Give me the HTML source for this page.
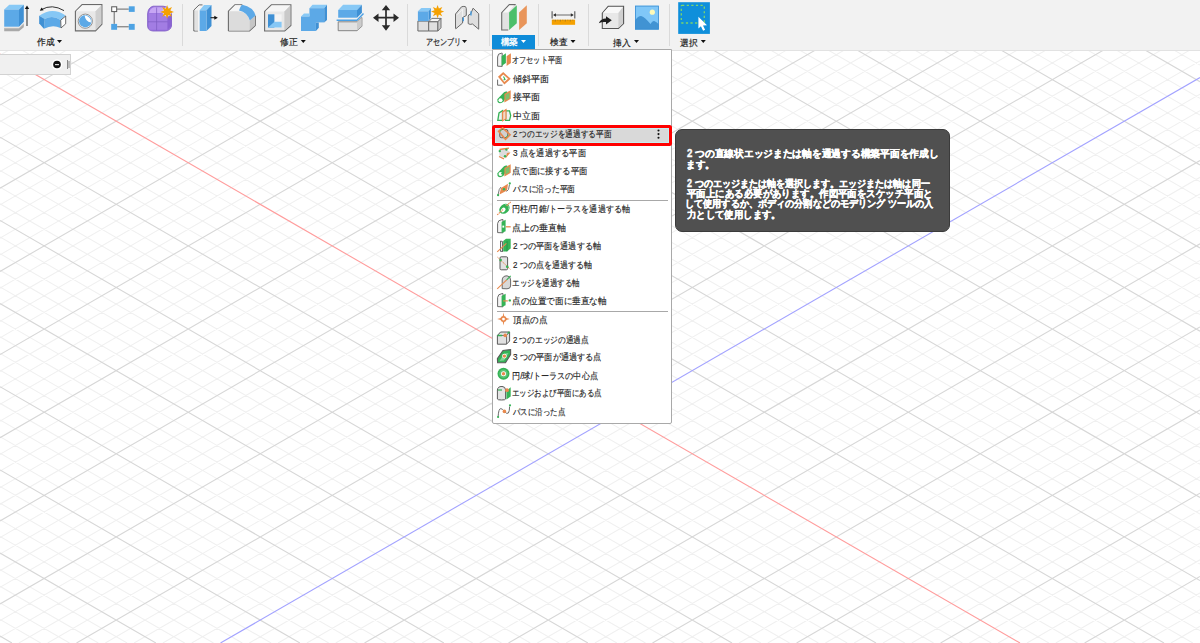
<!DOCTYPE html>
<html><head><meta charset="utf-8"><style>
*{box-sizing:border-box}
html,body{margin:0;padding:0;width:1200px;height:643px;overflow:hidden;background:#fff;font-family:"Liberation Sans",sans-serif}
.grid{position:absolute;left:0;top:0}
.tx{position:absolute;line-height:12px;white-space:nowrap;transform-origin:0 0;-webkit-text-stroke:0.15px currentColor}
.a{position:absolute}
#tb{position:absolute;left:0;top:0;width:1200px;height:50.6px;background:#f2f2f2;border-bottom:1.2px solid #e2e2e2}
.sep{position:absolute;top:4px;width:1px;height:42px;background:#dadada}
.lbl{position:absolute;top:36px;height:12px;font-size:9px;line-height:12px;color:#2a2a2a;white-space:nowrap;letter-spacing:-0.2px}
.tri{display:inline-block;width:0;height:0;border-left:2.5px solid transparent;border-right:2.5px solid transparent;border-top:3px solid #111;vertical-align:middle;margin-left:3px;position:relative;top:-1px}
#panel{position:absolute;left:-1px;top:54px;width:72px;height:21px;background:#f0f0f0;border:1px solid #d2d2d2}
#menu{position:absolute;left:492px;top:49px;width:180px;height:375px;background:#fff;border:1px solid #a9a9a9;border-top:1px solid #a9a9a9;border-radius:0 0 2px 2px}
.row{position:absolute;left:0;width:178px;height:18px}
.row .t{position:absolute;left:20px;top:3px;font-size:8.6px;line-height:12px;color:#333;white-space:nowrap}
.row svg{position:absolute;left:4px;top:2px}
.msep{position:absolute;left:4px;width:171px;height:1px;background:#a8a8a8}
#tip{position:absolute;left:675px;top:129px;width:275px;height:103px;background:#505050;border-radius:7px;border:1px solid #3b3b3b}
#tip .tx{position:absolute;left:11px;top:17px;width:262px;font-size:9.6px;line-height:10.2px;color:#fff;font-weight:bold;white-space:nowrap}
</style></head><body>
<svg class="grid" width="1200" height="643" viewBox="0 0 1200 643">
<path d="M1173.7 0.0L1200.0 15.2M1144.9 0.0L1200.0 31.8M1116.1 0.0L1200.0 48.5M1087.3 0.0L1200.0 65.1M1029.7 0.0L1200.0 98.3M1000.9 0.0L1200.0 115.0M972.0 0.0L1200.0 131.6M943.2 0.0L1200.0 148.2M885.6 0.0L1200.0 181.5M856.8 0.0L1200.0 198.1M828.0 0.0L1200.0 214.8M799.2 0.0L1200.0 231.4M741.6 0.0L1200.0 264.6M712.8 0.0L1200.0 281.3M684.0 0.0L1200.0 297.9M655.2 0.0L1200.0 314.5M597.6 0.0L1200.0 347.8M568.8 0.0L1200.0 364.4M540.0 0.0L1200.0 381.1M511.2 0.0L1200.0 397.7M453.6 0.0L1200.0 430.9M424.8 0.0L1200.0 447.6M396.0 0.0L1200.0 464.2M367.2 0.0L1200.0 480.8M309.6 0.0L1200.0 514.1M280.8 0.0L1200.0 530.7M251.9 0.0L1200.0 547.4M223.1 0.0L1200.0 564.0M165.5 0.0L1200.0 597.2M136.7 0.0L1200.0 613.9M107.9 0.0L1200.0 630.5M79.1 0.0L1192.8 643.0M21.5 0.0L1135.2 643.0M0.0 4.2L1106.4 643.0M0.0 20.8L1077.6 643.0M0.0 37.5L1048.8 643.0M0.0 70.7L991.2 643.0M0.0 87.4L962.4 643.0M0.0 104.0L933.6 643.0M0.0 120.6L904.8 643.0M0.0 153.9L847.2 643.0M0.0 170.5L818.4 643.0M0.0 187.1L789.6 643.0M0.0 203.8L760.8 643.0M0.0 237.0L703.2 643.0M0.0 253.7L674.4 643.0M0.0 270.3L645.5 643.0M0.0 286.9L616.8 643.0M0.0 320.2L559.1 643.0M0.0 336.8L530.3 643.0M0.0 353.4L501.5 643.0M0.0 370.1L472.7 643.0M0.0 403.3L415.1 643.0M0.0 420.0L386.3 643.0M0.0 436.6L357.5 643.0M0.0 453.2L328.7 643.0M0.0 486.5L271.1 643.0M0.0 503.1L242.3 643.0M0.0 519.7L213.5 643.0M0.0 536.4L184.7 643.0M0.0 569.6L127.1 643.0M0.0 586.3L98.3 643.0M0.0 602.9L69.5 643.0M0.0 619.5L40.7 643.0M0.0 5.3L9.2 0.0M0.0 38.6L66.8 0.0M0.0 55.2L95.6 0.0M0.0 71.8L124.4 0.0M0.0 88.5L153.2 0.0M0.0 121.7L210.8 0.0M0.0 138.4L239.7 0.0M0.0 155.0L268.4 0.0M0.0 171.6L297.2 0.0M0.0 204.9L354.9 0.0M0.0 221.5L383.7 0.0M0.0 238.1L412.5 0.0M0.0 254.8L441.3 0.0M0.0 288.0L498.9 0.0M0.0 304.7L527.7 0.0M0.0 321.3L556.5 0.0M0.0 337.9L585.3 0.0M0.0 371.2L642.9 0.0M0.0 387.8L671.7 0.0M0.0 404.4L700.5 0.0M0.0 421.1L729.3 0.0M0.0 454.3L786.9 0.0M0.0 471.0L815.7 0.0M0.0 487.6L844.5 0.0M0.0 504.2L873.3 0.0M0.0 537.5L930.9 0.0M0.0 554.1L959.8 0.0M0.0 570.7L988.5 0.0M0.0 587.4L1017.4 0.0M0.0 620.6L1075.0 0.0M0.0 637.3L1103.8 0.0M18.9 643.0L1132.6 0.0M47.7 643.0L1161.4 0.0M105.3 643.0L1200.0 11.0M134.1 643.0L1200.0 27.6M162.9 643.0L1200.0 44.2M191.7 643.0L1200.0 60.9M249.3 643.0L1200.0 94.1M278.1 643.0L1200.0 110.7M306.9 643.0L1200.0 127.4M335.7 643.0L1200.0 144.0M393.3 643.0L1200.0 177.3M422.1 643.0L1200.0 193.9M450.9 643.0L1200.0 210.5M479.7 643.0L1200.0 227.2M537.3 643.0L1200.0 260.4M566.1 643.0L1200.0 277.0M594.9 643.0L1200.0 293.7M623.8 643.0L1200.0 310.3M681.4 643.0L1200.0 343.6M710.2 643.0L1200.0 360.2M739.0 643.0L1200.0 376.8M767.8 643.0L1200.0 393.4M825.4 643.0L1200.0 426.7M854.2 643.0L1200.0 443.3M883.0 643.0L1200.0 460.0M911.8 643.0L1200.0 476.6M969.4 643.0L1200.0 509.9M998.2 643.0L1200.0 526.5M1027.0 643.0L1200.0 543.1M1055.8 643.0L1200.0 559.8M1113.4 643.0L1200.0 593.0M1142.2 643.0L1200.0 609.6M1171.0 643.0L1200.0 626.3M1199.8 643.0L1200.0 642.9" stroke="#f0f0f0" stroke-width="1.05" fill="none"/>
<path d="M1058.5 0.0L1200.0 81.7M914.4 0.0L1200.0 164.9M770.4 0.0L1200.0 248.0M626.4 0.0L1200.0 331.2M482.4 0.0L1200.0 414.3M338.4 0.0L1200.0 497.5M194.3 0.0L1200.0 580.6M50.3 0.0L1164.0 643.0M0.0 137.2L876.0 643.0M0.0 220.4L732.0 643.0M0.0 303.6L587.9 643.0M0.0 386.7L443.9 643.0M0.0 469.9L299.9 643.0M0.0 553.0L155.9 643.0M0.0 636.1L11.9 643.0M0.0 21.9L38.0 0.0M0.0 105.1L182.0 0.0M0.0 188.2L326.1 0.0M0.0 271.4L470.1 0.0M0.0 354.6L614.1 0.0M0.0 437.7L758.1 0.0M0.0 520.9L902.1 0.0M0.0 604.0L1046.2 0.0M76.5 643.0L1190.2 0.0M364.5 643.0L1200.0 160.6M508.5 643.0L1200.0 243.8M652.5 643.0L1200.0 326.9M796.6 643.0L1200.0 410.1M940.6 643.0L1200.0 493.2M1084.6 643.0L1200.0 576.4" stroke="#d7d7d7" stroke-width="1.1" fill="none"/>
<path d="M0.0 54.1L1020.0 643.0" stroke="#ff9c9c" stroke-width="1.1" fill="none"/>
<path d="M220.5 643.0L1200.0 77.5" stroke="#a2a2ff" stroke-width="1.1" fill="none"/>
</svg>
<div id="tb">
<div class="sep" style="left:182px"></div>
<div class="sep" style="left:407px"></div>
<div class="sep" style="left:489px"></div>
<div class="sep" style="left:538px"></div>
<div class="sep" style="left:588px"></div>
<div class="sep" style="left:669px"></div>
<div class="a" style="left:492.2px;top:34.7px;width:42.8px;height:14.5px;background:#0f8cd9"></div>
<svg class="a" style="left:0;top:0" width="1200" height="49" viewBox="0 0 1200 49">
<g fill="#111"><path d="M57 40H62L59.5 43Z"/><path d="M300.8 40H305.8L303.3 43Z"/><path d="M462 40H467L464.5 43Z"/><path d="M521 40H526L523.5 43Z" fill="#fff"/><path d="M570.5 40H575.5L573 43Z"/><path d="M634 40H639L636.5 43Z"/><path d="M700.8 40H705.8L703.3 43Z"/></g>
<!-- 1 extrude -->
<path d="M4.2 28H19L23.8 23.6V27.3L19 31.2H4.2Z" fill="#a9a9a9"/><path d="M4.2 28H19L23.8 23.6" fill="none" stroke="#d9d4cf" stroke-width="0.8"/>
<path d="M4.2 9.5L9.3 4.8H23.8L19 9.5Z" fill="#88c9f6"/>
<path d="M19 9.5L23.8 4.8V21.7L19 26.7Z" fill="#3f90d4"/>
<rect x="4.2" y="9.5" width="14.8" height="17.2" fill="#5ca9e7"/>
<path d="M27 26V8.5" stroke="#555" stroke-width="1.3"/><path d="M24.8 8.9L27 5.6L29.2 8.9Z" fill="#111"/>
<!-- 2 revolve -->
<path d="M41.5 9.6Q52 3.5 64 10.6" stroke="#333" stroke-width="1" fill="none"/><path d="M39.8 10.8L41.6 7.6L43.6 10.3Z" fill="#111"/>
<path d="M39.2 15.7Q52.3 6.5 65.6 15.4L60.5 20.1Q53 14.8 44.7 18.9Z" fill="#86c7f5"/>
<path d="M44.7 18.9Q53 14.8 60.5 20.1V27.9Q52.5 24 43.9 28.8Z" fill="#5ca9e7"/>
<path d="M39.2 15.7L44.7 18.9L43.9 28.8L39.2 23.5Z" fill="#3f90d4"/>
<path d="M60.7 20.2L65.7 16V23.8L61 28Z" fill="#fff" stroke="#444" stroke-width="0.8"/>
<!-- 3 hole -->
<path d="M75.4 11.3L82.1 4.6H101.9V24.2L95.5 30.9H75.4Z" fill="#e8e8e8" stroke="#6a6a6a" stroke-width="1.1"/>
<path d="M76 11.3L82.4 5.2H101.4L95.5 11.3Z" fill="#f6f6f6"/>
<path d="M95.5 11.3L101.4 5.2V24L95.5 30.3Z" fill="#cfcfcf"/>
<circle cx="85.3" cy="21.2" r="7.1" fill="#fff" stroke="#777" stroke-width="0.8"/>
<circle cx="85.3" cy="21.2" r="6.2" fill="#5ca9e7"/>
<path d="M84.6 15.3Q85.4 22 90.9 22.4Q91.3 16.5 84.6 15.3Z" fill="#fff"/>
<!-- 4 sketch -->
<path d="M117.1 9.1H128.8M114.2 12V23.9M117.1 26.8H128.8" stroke="#666" stroke-width="1"/>
<rect x="111.7" y="6.8" width="5" height="4.8" fill="#fff" stroke="#555" stroke-width="1"/>
<rect x="128.8" y="6.3" width="5.9" height="5.6" fill="#4ea3e4"/>
<rect x="111.2" y="23.9" width="5.9" height="5.9" fill="#4ea3e4"/>
<rect x="128.8" y="23.9" width="5.9" height="5.9" fill="#4ea3e4"/>
<!-- 5 form -->
<path d="M147.6 14Q148 7.5 153 6.2H163Q169 6.5 171.5 12V26Q170.5 30.6 165 31H153Q147.8 30.7 147.6 26Z" fill="#9a74de" stroke="#7c58c4" stroke-width="0.8"/>
<path d="M149 13Q150 8 154 7.2H162Q167 7.5 167.5 13Z" fill="#c6a6f4"/>
<path d="M149 13.5H167.5V29.5H149Z" fill="#a884e6" opacity="0.6"/>
<path d="M156.6 7.5V30.5M148 21.8H168" stroke="#7d5cc0" stroke-width="0.7"/>
<path d="M167.5 13V30L171.3 26V14Z" fill="#8a63d2"/>
<circle cx="167.1" cy="11.9" r="4.6" fill="#fff" opacity="0.7"/><path d="M167.1 5.0L168.4 8.8L172.0 7.0L170.2 10.6L174.0 11.9L170.2 13.2L172.0 16.8L168.4 15.0L167.1 18.8L165.8 15.0L162.2 16.8L164.0 13.2L160.2 11.9L164.0 10.6L162.2 7.0L165.8 8.8Z" fill="#f5a100"/><circle cx="167.1" cy="11.9" r="2.6" fill="#f5a100"/>
<!-- 6 press pull -->
<path d="M197.9 31H193.8V10.1L199.1 4.9H202.5" fill="#f4f4f4" stroke="#6a6a6a" stroke-width="1"/>
<rect x="195" y="10.5" width="3" height="20" fill="#e2e2e2"/>
<path d="M199.7 10.3L204 5.1H211.5L206.5 10.3Z" fill="#88c9f6"/>
<path d="M206.5 10.3L211.5 5.1V26L206.5 31Z" fill="#3f90d4"/>
<rect x="199.7" y="10.3" width="6.8" height="20.7" fill="#5ca9e7"/>
<path d="M210.5 17.7H215" stroke="#222" stroke-width="1.1"/><path d="M214.3 15.8L217.8 17.7L214.3 19.8Z" fill="#111"/>
<!-- 7 fillet -->
<path d="M228.4 31V11.3L234.9 4.8H242.3" fill="none" stroke="#6a6a6a" stroke-width="1.1"/>
<path d="M228.4 31H249.5L255.3 25.5V15.8" fill="none" stroke="#6a6a6a" stroke-width="1.1"/>
<path d="M229 11.3L235 5.3H241L239.2 10.6Q233 11 229 11.3Z" fill="#f6f6f6"/>
<path d="M229 11.3H238Q248 12 249.5 20.7V30.5H229Z" fill="#dcdcdc"/>
<path d="M249.5 20.7L255 15.8V25.2L249.5 30.5Z" fill="#c5c5c5"/>
<path d="M239 10.6Q241 5 242.3 4.8Q253 7 255.6 15.4L249.8 20.6Q247.5 12.5 239 10.6Z" fill="#5ca9e7"/>
<!-- 8 shell -->
<path d="M264.6 31V11.6L271.4 4.8H290.9V25.5L284.7 31Z" fill="#e8e8e8" stroke="#6a6a6a" stroke-width="1.1"/>
<path d="M265.2 11.6L271.6 5.4H290.3L284.4 11.6Z" fill="#f6f6f6"/>
<path d="M284.4 11.6L290.3 5.4V25.3L284.4 30.5Z" fill="#c9c9c9"/>
<rect x="268" y="14.3" width="13.6" height="13.3" fill="#f4f4f4"/>
<rect x="268" y="14.3" width="6.4" height="13.3" fill="#3f90d4"/>
<path d="M268 27.6L274.5 21.8H281.6V27.6Z" fill="#86c7f5"/>
<!-- 9 combine -->
<path d="M309.4 8.2L312.5 4.8H327L324.2 8.2Z" fill="#88c9f6"/>
<path d="M324.2 8.2L327 4.8V20L324.2 22.4Z" fill="#3f90d4"/>
<rect x="309.4" y="8.2" width="14.8" height="14.2" fill="#5ca9e7"/>
<path d="M301 16.5L304 13.4H309.4V16.5Z" fill="#88c9f6"/>
<rect x="301" y="16.5" width="14.9" height="14.5" fill="#5ca9e7"/>
<path d="M315.9 22.4H318.8V27.8L315.9 31Z" fill="#3f90d4"/>
<!-- 10 split -->
<path d="M338.2 10L343.1 4.8H361.9L357 10Z" fill="#88c9f6"/>
<path d="M357 10L361.9 4.8V12.8L357 17.7Z" fill="#3f90d4"/>
<rect x="338.2" y="10" width="18.8" height="7.7" fill="#5ca9e7"/>
<path d="M336.6 20.2H357L363.5 13.4" fill="none" stroke="#4aa0e4" stroke-width="1.4"/>
<path d="M338.2 21.8H357L361.9 17.5V26.3L357 30.7H338.2Z" fill="#e2e2e2" stroke="#7a7a7a" stroke-width="0.9"/>
<path d="M357 21.8V30.4L361.5 26.2V17.8Z" fill="#cbcbcb"/>
<!-- 11 move -->
<path d="M386 8V27.5M376 17.7H396" stroke="#2a2a2a" stroke-width="1.7"/>
<path d="M386 5L390.2 10.2H381.8Z M386 30.7L390.2 25.3H381.8Z M373 17.7L378.5 13.5V21.9Z M399 17.7L393.5 13.5V21.9Z" fill="#2a2a2a"/>
<!-- 12 new component -->
<path d="M417.9 21.1H428.7V31H417.9Z" fill="#e0e0e0" stroke="#6a6a6a" stroke-width="1"/>
<path d="M428.7 21.8L431.8 18.4H441L437.9 21.8Z" fill="#f6f6f6" stroke="#6a6a6a" stroke-width="0.9"/>
<path d="M428.7 21.8H437.9V31H428.7Z" fill="#e0e0e0" stroke="#6a6a6a" stroke-width="1"/>
<path d="M437.9 21.8L441 18.4V27.8L437.9 31Z" fill="#cbcbcb" stroke="#6a6a6a" stroke-width="0.9"/>
<path d="M417.9 11.3L421.3 7.9H430.8L428.7 11.3Z" fill="#88c9f6"/>
<path d="M428.7 11.3L430.8 7.9V18L428.7 21.1Z" fill="#3f90d4"/>
<rect x="417.9" y="11.3" width="10.8" height="9.8" fill="#5ca9e7"/>
<path d="M437.6 5.0L438.9 8.6L442.3 6.9L440.6 10.3L444.2 11.6L440.6 12.9L442.3 16.3L438.9 14.6L437.6 18.2L436.3 14.6L432.9 16.3L434.6 12.9L431.0 11.6L434.6 10.3L432.9 6.9L436.3 8.6Z" fill="#f5a100"/><circle cx="437.6" cy="11.6" r="2.5" fill="#f5a100"/>
<!-- 13 joint -->
<path d="M455.5 28.5V14L461.5 6.8Q463 6.2 465 6.5Q466.3 7 466.3 8.5V15.5L462.6 17.5V23L455.8 28.8Z" fill="#dedede" stroke="#6a6a6a" stroke-width="1"/>
<path d="M457.5 14.5L462.6 9V17" fill="none" stroke="#f4f4f4" stroke-width="1"/>
<path d="M468.2 23.6V16Q468.5 14.3 470.5 14.3L473.1 8.2L478.7 13.7V29.2L472.5 24Q470 25 468.2 23.6Z" fill="#dedede" stroke="#6a6a6a" stroke-width="1"/>
<path d="M463.3 17.4V21.2M471 11.3V15.6" stroke="#3f9be4" stroke-width="1.3"/>
<!-- 14 construct -->
<path d="M508.3 30H501.7V12.6L509.3 4.6H515.7" fill="#e2e2e2" stroke="#6a6a6a" stroke-width="1.1"/>
<path d="M502.8 12.6L509.5 5.5H514L508 12.6Z" fill="#f8f8f8"/>
<path d="M509.1 12.6L516.8 5.2V23.2L509.1 30Z" fill="#4cbf6a"/>
<path d="M519.1 12.6L526.8 5.2V23.2L519.1 30Z" fill="#e9955a"/>
<!-- 15 measure -->
<path d="M552.1 11.3V18.4M574.8 11.3V18.4" stroke="#555" stroke-width="1.1"/>
<path d="M554 15H572.5" stroke="#777" stroke-width="1.1"/>
<path d="M553 15L556 13.3V16.7Z M573.8 15L570.8 13.3V16.7Z" fill="#333"/>
<rect x="551.8" y="19.7" width="23.3" height="5.1" fill="#f5a100"/>
<path d="M555.3 19.7V21.5M560.3 19.7V21.5M565.3 19.7V21.5M570.3 19.7V21.5M553 19.7V20.5M557.8 19.7V20.5M562.8 19.7V20.5M567.8 19.7V20.5M572.8 19.7V20.5" stroke="#8a6a30" stroke-width="0.7"/>
<!-- 16 insert derive -->
<path d="M602.3 28.5V13.1L608.2 6.3H623.6V23.6L618.4 28.5Z" fill="#e8e8e8" stroke="#555" stroke-width="1.1"/>
<path d="M603 13.1L608.5 6.9H623L618.4 13.1Z" fill="#f8f8f8"/>
<path d="M618.4 13.1L623 6.9V23.4L618.4 28Z" fill="#d0d0d0"/>
<path d="M598.8 23.2Q601 18.5 606 18.6V16.3L611.8 20.3L606 24.6V22Q602 21.5 598.8 23.2Z" fill="#1e1e1e"/>
<!-- 17 canvas -->
<rect x="635" y="5.7" width="23.8" height="23.8" fill="#80c7f8"/>
<path d="M635 20.5Q638.5 15.5 641.8 16.2Q644.5 17 650.5 23.9Q652.5 20.5 654.2 21.1Q656.5 21.8 658.8 24.2V29.5H635Z" fill="#4193d3"/>
<rect x="635.4" y="6.1" width="23" height="23" fill="none" stroke="#3b8ed2" stroke-width="0.8"/>
<circle cx="652.3" cy="12.2" r="2.6" fill="#fffab8"/>
<!-- 18 select -->
<rect x="678.2" y="2.2" width="31.7" height="31.7" fill="#0f8fdb"/>
<rect x="681.3" y="5.3" width="23" height="17.7" rx="0.8" fill="none" stroke="#7ed66b" stroke-width="1.3" stroke-dasharray="2.2 2.4"/>
<path d="M698.4 16.8V28.6L700.9 26.3L703.1 30.8L705.1 29.7L703 25.6L707 25.2Z" fill="#fff"/>
</svg>

</div>
<div id="panel"><svg class="a" style="left:50.2px;top:2.9px" width="14" height="14" viewBox="0 0 14 14"><circle cx="7" cy="6.5" r="5.3" fill="#fff"/><circle cx="7" cy="6.5" r="3.8" fill="#111"/><rect x="5" y="6" width="4" height="1.2" fill="#ddd"/></svg>
<div class="a" style="left:67px;top:5px;width:1px;height:9px;background:#888"></div><div class="a" style="left:68px;top:6px;width:2px;height:7px;background:#bbb"></div></div>
<div id="menu">
<div class="a" style="left:-1.3px;top:74.5px;width:180.2px;height:21.5px;border:3px solid #ff0000;border-radius:2.5px;background:#d9d9d9;box-shadow:inset 0 0 0 0.9px #c6eef2"></div>
<svg class="a" style="left:163.7px;top:79.3px" width="3" height="11" viewBox="0 0 3 11"><circle cx="1.5" cy="1.5" r="1.05" fill="#111"/><circle cx="1.5" cy="5.1" r="1.05" fill="#111"/><circle cx="1.5" cy="8.8" r="1.05" fill="#111"/></svg>
<svg class="a" style="left:3px;top:2.30px" width="16" height="16" viewBox="0 0 16 16"><path d="M1.6 14.2V5Q1.6 1.3 5.5 1.2H6.2V14.4Z" fill="#f4f4f4" stroke="#5a5a5a" stroke-width="0.9"/><path d="M5.6 4.2L9.9 1.2V11L5.6 13.9Z" fill="#35b356"/><path d="M10.6 4.2L14.9 1.2V11L10.6 13.9Z" fill="#e8894d"/></svg>
<svg class="a" style="left:3px;top:20.78px" width="16" height="16" viewBox="0 0 16 16"><path d="M1.6 8.6V14.2H6.5" fill="none" stroke="#5a5a5a" stroke-width="0.9"/><path d="M7.2 1L14.7 7.8L8.4 13.4L2 5.8Z" fill="#e8894d"/><path d="M7.3 3.6L12 7.8L8.3 10.9L4.6 6.1Z" fill="#fff"/><path d="M7.5 5.5L9 8.5L7.5 9" stroke="#35b356" stroke-width="1.1" fill="none"/></svg>
<svg class="a" style="left:3px;top:39.26px" width="16" height="16" viewBox="0 0 16 16"><path d="M1.3 10.2L8 3.2Q9.5 2.2 11.2 2.6V6.5L7.5 12.8Q4 15.5 1.6 13Z" fill="#35b356"/><circle cx="4.5" cy="11.3" r="2" fill="#fff"/><path d="M8.4 5L14.7 1.2V9.8L8.4 13.6Z" fill="#e8894d"/><path d="M9.6 5.8L13.5 3.4V9.2L9.6 11.6Z" fill="#7fbf6a"/></svg>
<svg class="a" style="left:3px;top:57.74px" width="16" height="16" viewBox="0 0 16 16"><path d="M1.8 12.4L3 5L6.5 2.8V12.4Z" fill="#f0f0f0" stroke="#35b356" stroke-width="1.3"/><path d="M9.6 12.4V2.8H13.5L14.7 7.6L13.5 12.4Z" fill="#f0f0f0" stroke="#35b356" stroke-width="1.3"/><path d="M6 3.5L10.6 0.6V11L6 13.8Z" fill="#e8894d"/><path d="M7.2 4.5L9.4 3V10.5L7.2 12Z" fill="#f2d9c8"/></svg>
<svg class="a" style="left:3px;top:76.22px" width="16" height="16" viewBox="0 0 16 16"><rect x="3.8" y="3.5" width="8" height="8.2" rx="1.5" fill="#d0d0d0" stroke="#5a5a5a" stroke-width="1"/><path d="M6.6 1.8L14.1 8.7L9.5 13.3L2.6 5.3Z" fill="none" stroke="#e8894d" stroke-width="1.6"/><path d="M4 5.3L6.4 3.2M9.6 11.7L12.4 8.8" stroke="#35b356" stroke-width="0.9"/></svg>
<svg class="a" style="left:3px;top:94.70px" width="16" height="16" viewBox="0 0 16 16"><path d="M3 6L8 3L14 7L9.5 13L3.5 11Z" fill="#dcdcdc"/><path d="M3 6L8 3L6 4.5ZM14.5 7.5L9.5 13.5L11 8Z" fill="#e8894d"/><path d="M3.5 4.5L13 3.2M3 11.5L8 13.8" stroke="#e8894d" stroke-width="1.3"/><circle cx="3.8" cy="6.1" r="1.2" fill="#35b356"/><circle cx="10.4" cy="4.6" r="1.2" fill="#35b356"/><circle cx="9" cy="11.3" r="1.2" fill="#35b356"/></svg>
<svg class="a" style="left:3px;top:113.18px" width="16" height="16" viewBox="0 0 16 16"><path d="M1.3 10.2L8 3.2Q9.5 2.2 11.2 2.6V6.5L7.5 12.8Q4 15.5 1.6 13Z" fill="#35b356"/><circle cx="4.5" cy="11.1" r="2" fill="#fff"/><path d="M8.4 5L14.7 1.2V9.8L8.4 13.6Z" fill="#e8894d"/><path d="M9.6 5.8L13.5 3.4V9.2L9.6 11.6Z" fill="#7fbf6a"/><circle cx="6.2" cy="10.6" r="1.1" fill="#35b356"/></svg>
<svg class="a" style="left:3px;top:131.66px" width="16" height="16" viewBox="0 0 16 16"><path d="M3.5 12.6L5 6L12 1.8L11 8.5Z" fill="#e8894d"/><path d="M2 13Q3 6 5 5M10.5 9.5Q13 9 13.5 2.5" fill="none" stroke="#777" stroke-width="1"/><circle cx="8" cy="7.2" r="1.2" fill="#35b356"/><circle cx="2.1" cy="13.2" r="1.1" fill="#35b356"/><circle cx="13.8" cy="1.4" r="1.1" fill="#35b356"/></svg>
<svg class="a" style="left:3px;top:150.64px" width="16" height="16" viewBox="0 0 16 16"><ellipse cx="8.4" cy="7.8" rx="5.6" ry="4.4" transform="rotate(-40 8.4 7.8)" fill="#35b356"/><ellipse cx="7.2" cy="9" rx="2.6" ry="2" transform="rotate(-40 7.2 9)" fill="#fff"/><path d="M9 3.5Q13.5 4 12.5 8.5" stroke="#7fd494" stroke-width="1" fill="none"/><path d="M1.2 13.9L7 8.6M10.5 4.8L14.7 1" stroke="#e8894d" stroke-width="1.1" stroke-dasharray="1.6 0.6"/></svg>
<svg class="a" style="left:3px;top:169.12px" width="16" height="16" viewBox="0 0 16 16"><path d="M1.6 13.6V4.5Q1.8 1 6 0.6H7V13.8Z" fill="#f4f4f4" stroke="#5a5a5a" stroke-width="0.9"/><path d="M5.6 3L9.6 0.8V12.2L5.6 13.9Z" fill="#35b356"/><rect x="6.4" y="6.6" width="1.8" height="2" fill="#fff"/><path d="M9.8 7.8H14.7" stroke="#e8894d" stroke-width="1.3"/></svg>
<svg class="a" style="left:3px;top:187.60px" width="16" height="16" viewBox="0 0 16 16"><path d="M6.5 13V3.5L4.5 3V13.4H7Z" fill="#eee" stroke="#5a5a5a" stroke-width="0.9"/><path d="M7.2 3L10 0.7H14.7V10.5L11 13.4H7.2Z" fill="#35b356"/><path d="M8.5 2.5H12.5V11.5H9Z" fill="#f6f6f6" opacity="0"/><path d="M11 3V13.3" stroke="#1f8f3f" stroke-width="0.8"/><path d="M1.2 13.9L10.4 5.3" stroke="#e8894d" stroke-width="1.1"/></svg>
<svg class="a" style="left:3px;top:206.08px" width="16" height="16" viewBox="0 0 16 16"><rect x="4" y="0.8" width="7.6" height="13" rx="1.2" fill="#e2e2e2" stroke="#5a5a5a" stroke-width="1"/><path d="M1.5 1.2L14.4 13.4" stroke="#e8894d" stroke-width="1" stroke-dasharray="1.6 0.8"/><circle cx="4.6" cy="4.1" r="1.3" fill="#35b356"/><circle cx="11.2" cy="10.7" r="1.3" fill="#35b356"/></svg>
<svg class="a" style="left:3px;top:224.56px" width="16" height="16" viewBox="0 0 16 16"><path d="M6.2 13.6V5Q6.4 0.8 11 0.8Q14.6 1 14.6 5V11Q14.4 13.8 11 13.8Z" fill="#d8d8d8" stroke="#5a5a5a" stroke-width="0.9"/><path d="M1.2 13.9L10.7 4.8" stroke="#e8894d" stroke-width="1.1"/><path d="M10.7 4.8L14.7 0.8" stroke="#35b356" stroke-width="1.2"/></svg>
<svg class="a" style="left:3px;top:243.04px" width="16" height="16" viewBox="0 0 16 16"><path d="M1.6 13.6V4.5Q1.8 1 6 0.6H7V13.8Z" fill="#f4f4f4" stroke="#5a5a5a" stroke-width="0.9"/><path d="M5.6 3L9.6 0.8V12.2L5.6 13.9Z" fill="#35b356"/><path d="M7.2 7.9H11.8" stroke="#e8894d" stroke-width="1.2"/><circle cx="13.8" cy="7.4" r="1.2" fill="#35b356"/></svg>
<svg class="a" style="left:3px;top:262.02px" width="16" height="16" viewBox="0 0 16 16"><path d="M7.5 0.6L8.5 5.6L13.8 7.1L8.5 8.6L7.5 13.6L6.5 8.6L1.2 7.1L6.5 5.6Z" fill="#e8894d"/><circle cx="7.5" cy="7.1" r="3" fill="#e8894d"/><circle cx="7.5" cy="7.1" r="1.4" fill="#fff"/></svg>
<svg class="a" style="left:3px;top:280.50px" width="16" height="16" viewBox="0 0 16 16"><path d="M1.4 4.5L4.5 1H13.6V10L10.5 13.2H1.4Z" fill="#e0e0e0" stroke="#5a5a5a" stroke-width="1"/><path d="M1.4 4.5H10.5V13.2M10.5 4.5L13.6 1" fill="none" stroke="#5a5a5a" stroke-width="0.8"/><path d="M1.5 4.5H6M11.5 2.5L13.5 0.8" stroke="#35b356" stroke-width="1.4"/><circle cx="9.2" cy="4.4" r="1.8" fill="#e8894d"/></svg>
<svg class="a" style="left:3px;top:298.98px" width="16" height="16" viewBox="0 0 16 16"><path d="M1.4 9.6L7 1.4L14.6 0.6V5.5L9.5 13.8L1.6 13.6Z" fill="#35b356" stroke="#5a5a5a" stroke-width="1.1"/><path d="M3.5 12L8.5 4.5L12.5 4L8 11.5Z" fill="#b6e6c2" opacity="0.6"/><circle cx="8.4" cy="7.1" r="2.3" fill="#fff"/><circle cx="8.4" cy="7.1" r="1.7" fill="#e8894d"/></svg>
<svg class="a" style="left:3px;top:317.46px" width="16" height="16" viewBox="0 0 16 16"><circle cx="7.5" cy="6.8" r="6" fill="#35b356"/><circle cx="7.5" cy="6.8" r="4.3" fill="#5cc477"/><circle cx="7.5" cy="6.8" r="2.5" fill="#fff"/><circle cx="7.5" cy="6.8" r="1.7" fill="#e8894d"/></svg>
<svg class="a" style="left:3px;top:335.94px" width="16" height="16" viewBox="0 0 16 16"><path d="M1.4 13V4Q1.6 0.4 6 0.4Q9.5 0.6 9.6 4V13Q9.4 14 5.5 14Q1.6 14 1.4 13Z" fill="#e4e4e4" stroke="#5a5a5a" stroke-width="1"/><path d="M2 4H6" stroke="#35b356" stroke-width="1.2"/><path d="M10.4 5L14.7 1.3V10.5L10.4 13.4Z" fill="#35b356"/><circle cx="11" cy="4.2" r="1.9" fill="#e8894d"/></svg>
<svg class="a" style="left:3px;top:354.42px" width="16" height="16" viewBox="0 0 16 16"><path d="M2.1 12.8Q2.6 4.5 4.8 4.6Q6.5 4.8 8.4 7.4Q11 10.5 12.4 9Q13.6 7 13.6 2.5" fill="none" stroke="#6a6a6a" stroke-width="1"/><circle cx="8.4" cy="7.4" r="1.8" fill="#e8894d"/><circle cx="2.1" cy="13" r="1.1" fill="#35b356"/><circle cx="14" cy="1.3" r="1.1" fill="#35b356"/></svg>
<div class="msep" style="top:149.8px"></div>
<div class="msep" style="top:260.8px"></div>
</div>
<div id="tip"></div>
<div class="tx" style="left:512.10px;top:54.30px;font-size:9px;font-weight:400;color:#1e1e1e;transform:scaleX(0.7952);-webkit-text-stroke:0.15px currentColor">オフセット平面</div>
<div class="tx" style="left:512.90px;top:72.60px;font-size:9px;font-weight:400;color:#1e1e1e;transform:scaleX(0.9972);-webkit-text-stroke:0.15px currentColor">傾斜平面</div>
<div class="tx" style="left:512.90px;top:91.25px;font-size:9px;font-weight:400;color:#1e1e1e;transform:scaleX(0.9963);-webkit-text-stroke:0.15px currentColor">接平面</div>
<div class="tx" style="left:512.90px;top:110.05px;font-size:9px;font-weight:400;color:#1e1e1e;transform:scaleX(0.9963);-webkit-text-stroke:0.15px currentColor">中立面</div>
<div class="tx" style="left:512.90px;top:127.95px;font-size:9px;font-weight:400;color:#1e1e1e;transform:scaleX(0.8526);-webkit-text-stroke:0.15px currentColor">2 つのエッジを通過する平面</div>
<div class="tx" style="left:512.90px;top:146.70px;font-size:9px;font-weight:400;color:#1e1e1e;transform:scaleX(0.9150);-webkit-text-stroke:0.15px currentColor">3 点を通過する平面</div>
<div class="tx" style="left:511.97px;top:164.90px;font-size:9px;font-weight:400;color:#1e1e1e;transform:scaleX(0.9300);-webkit-text-stroke:0.15px currentColor">点で面に接する平面</div>
<div class="tx" style="left:512.90px;top:183.20px;font-size:9px;font-weight:400;color:#1e1e1e;transform:scaleX(0.8625);-webkit-text-stroke:0.15px currentColor">パスに沿った平面</div>
<div class="tx" style="left:512.00px;top:202.95px;font-size:9px;font-weight:400;color:#1e1e1e;transform:scaleX(0.9000);-webkit-text-stroke:0.15px currentColor">円柱/円錐/トーラスを通過する軸</div>
<div class="tx" style="left:511.90px;top:221.90px;font-size:9px;font-weight:400;color:#1e1e1e;transform:scaleX(0.9962);-webkit-text-stroke:0.15px currentColor">点上の垂直軸</div>
<div class="tx" style="left:512.90px;top:240.10px;font-size:9px;font-weight:400;color:#1e1e1e;transform:scaleX(0.9020);-webkit-text-stroke:0.15px currentColor">2 つの平面を通過する軸</div>
<div class="tx" style="left:512.90px;top:258.50px;font-size:9px;font-weight:400;color:#1e1e1e;transform:scaleX(0.8876);-webkit-text-stroke:0.15px currentColor">2 つの点を通過する軸</div>
<div class="tx" style="left:512.06px;top:277.45px;font-size:9px;font-weight:400;color:#1e1e1e;transform:scaleX(0.8350);-webkit-text-stroke:0.15px currentColor">エッジを通過する軸</div>
<div class="tx" style="left:511.94px;top:295.30px;font-size:9px;font-weight:400;color:#1e1e1e;transform:scaleX(0.9551);-webkit-text-stroke:0.15px currentColor">点の位置で面に垂直な軸</div>
<div class="tx" style="left:512.90px;top:314.20px;font-size:9px;font-weight:400;color:#1e1e1e;transform:scaleX(0.9472);-webkit-text-stroke:0.15px currentColor">頂点の点</div>
<div class="tx" style="left:512.90px;top:333.70px;font-size:9px;font-weight:400;color:#1e1e1e;transform:scaleX(0.8551);-webkit-text-stroke:0.15px currentColor">2 つのエッジの通過点</div>
<div class="tx" style="left:512.90px;top:351.25px;font-size:9px;font-weight:400;color:#1e1e1e;transform:scaleX(0.9082);-webkit-text-stroke:0.15px currentColor">3 つの平面が通過する点</div>
<div class="tx" style="left:512.00px;top:369.90px;font-size:9px;font-weight:400;color:#1e1e1e;transform:scaleX(0.9032);-webkit-text-stroke:0.15px currentColor">円/球/トーラスの中心点</div>
<div class="tx" style="left:512.07px;top:387.25px;font-size:9px;font-weight:400;color:#1e1e1e;transform:scaleX(0.8318);-webkit-text-stroke:0.15px currentColor">エッジおよび平面にある点</div>
<div class="tx" style="left:512.90px;top:406.40px;font-size:9px;font-weight:400;color:#1e1e1e;transform:scaleX(0.8286);-webkit-text-stroke:0.15px currentColor">パスに沿った点</div>
<div class="tx" style="left:36.70px;top:36.05px;font-size:9px;font-weight:400;color:#1e1e1e;transform:scaleX(0.9611);-webkit-text-stroke:0.2px currentColor">作成</div>
<div class="tx" style="left:280.00px;top:35.55px;font-size:9px;font-weight:400;color:#1e1e1e;transform:scaleX(0.9722);-webkit-text-stroke:0.2px currentColor">修正</div>
<div class="tx" style="left:425.71px;top:36.05px;font-size:9px;font-weight:400;color:#1e1e1e;transform:scaleX(0.7857);-webkit-text-stroke:0.2px currentColor">アセンブリ</div>
<div class="tx" style="left:500.50px;top:36.05px;font-size:9px;font-weight:400;color:#fff;transform:scaleX(0.9444);-webkit-text-stroke:0.35px currentColor">構築</div>
<div class="tx" style="left:550.00px;top:36.05px;font-size:9px;font-weight:400;color:#1e1e1e;transform:scaleX(0.9722);-webkit-text-stroke:0.2px currentColor">検査</div>
<div class="tx" style="left:613.30px;top:36.55px;font-size:9px;font-weight:400;color:#1e1e1e;transform:scaleX(0.9722);-webkit-text-stroke:0.2px currentColor">挿入</div>
<div class="tx" style="left:680.00px;top:36.55px;font-size:9px;font-weight:400;color:#1e1e1e;transform:scaleX(0.9722);-webkit-text-stroke:0.2px currentColor">選択</div>
<div class="tx" style="left:686.50px;top:147.75px;font-size:10px;font-weight:700;color:#fff;transform:scaleX(0.9735);-webkit-text-stroke:0.3px currentColor">2 つの直線状エッジまたは軸を通過する構築平面を作成し</div>
<div class="tx" style="left:685.55px;top:158.50px;font-size:10px;font-weight:700;color:#fff;transform:scaleX(0.9522);-webkit-text-stroke:0.3px currentColor">ます。</div>
<div class="tx" style="left:686.50px;top:178.15px;font-size:10px;font-weight:700;color:#fff;transform:scaleX(0.9041);-webkit-text-stroke:0.3px currentColor">2 つのエッジまたは軸を選択します。エッジまたは軸は同一</div>
<div class="tx" style="left:686.50px;top:188.05px;font-size:10px;font-weight:700;color:#fff;transform:scaleX(0.9438);-webkit-text-stroke:0.3px currentColor">平面上にある必要があります。作図平面をスケッチ平面と</div>
<div class="tx" style="left:684.68px;top:197.95px;font-size:10px;font-weight:700;color:#fff;transform:scaleX(0.9111);-webkit-text-stroke:0.3px currentColor">して使用するか、ボディの分割などのモデリング ツールの入</div>
<div class="tx" style="left:686.50px;top:208.50px;font-size:10px;font-weight:700;color:#fff;transform:scaleX(0.9372);-webkit-text-stroke:0.3px currentColor">力として使用します。</div>
</body></html>
